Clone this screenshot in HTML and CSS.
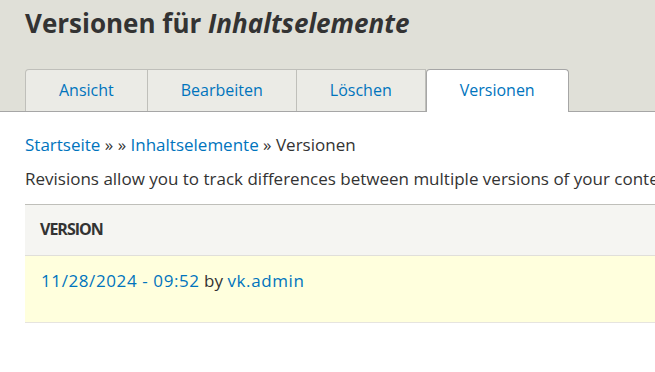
FILE: index.html
```html
<!DOCTYPE html>
<html lang="de">
<head>
  <meta charset="UTF-8">
  <meta name="viewport" content="width=device-width, initial-scale=1.0">
  <title>Versionen für Inhaltselemente</title>
  <link rel="stylesheet" href="styles.css">
</head>
<body>
  <div class="page">
    <header class="page-head">
      <h1>Versionen für <em>Inhaltselemente</em></h1>
      <ul class="tabs">
        <li><a href="#">Ansicht</a></li>
        <li><a href="#">Bearbeiten</a></li>
        <li><a href="#">Löschen</a></li>
        <li class="active"><a href="#">Versionen</a></li>
      </ul>
    </header>

    <main class="content">
      <nav class="breadcrumb">
        <a href="#">Startseite</a> » » <a href="#">Inhaltselemente</a> » Versionen
      </nav>
      <p class="intro">Revisions allow you to track differences between multiple versions of your content, and revert to older versions.</p>

      <table class="revisions">
        <thead>
          <tr><th>Version</th><th>Operations</th></tr>
        </thead>
        <tbody>
          <tr class="current">
            <td><a href="#">11/28/2024 - 09:52</a> by <a href="#">vk.admin</a></td>
            <td>Aktuelle Version</td>
          </tr>
        </tbody>
      </table>
    </main>
  </div>
</body>
</html>
```

FILE: styles.css
```css
body {
  margin: 0;
  font-family: "Open Sans", "Noto Sans", sans-serif;
  color: #333;
  background: #fff;
  overflow: hidden;
}

a {
  color: #0074bd;
  text-decoration: none;
}

.page {
  width: 1200px;
}

.page-head {
  background: #e0e0d8;
  padding: 0 25px;
  border-bottom: 1px solid #a6a6a6;
  height: 112px;
  box-sizing: border-box;
}

h1 {
  margin: 0;
  padding-top: 6px;
  font-size: 26px;
  line-height: 34px;
  font-weight: bold;
  color: #333;
}

h1 em {
  font-style: italic;
}

.tabs {
  display: flex;
  list-style: none;
  margin: 29px 0 0;
  padding: 0;
}

.tabs li {
  background: #ebebe6;
  border: 1px solid #bfbfba;
  border-bottom: none;
  border-left: none;
  height: 42px;
  box-sizing: border-box;
}

.tabs li:first-child {
  border-left: 1px solid #bfbfba;
  border-top-left-radius: 4px;
}

.tabs li.active {
  background: #fff;
  border: 1px solid #a6a6a6;
  border-bottom: none;
  border-radius: 4px 4px 0 0;
  height: 43px;
}

.tabs a {
  display: block;
  font-size: 16px;
  line-height: 40px;
  padding: 0 33px;
}

.content {
  padding: 0 25px;
}

.breadcrumb {
  font-size: 17px;
  line-height: 24px;
  margin-top: 21px;
}

.intro {
  font-size: 17px;
  line-height: 24px;
  margin: 10px 0 0;
}

.revisions {
  width: 100%;
  margin-top: 13px;
  border-collapse: separate;
  border-spacing: 0;
}

.revisions th {
  background: #f5f5f2;
  border-top: 1px solid #bfbfba;
  border-bottom: 1px solid #e0dfda;
  text-align: left;
  text-transform: uppercase;
  font-size: 16px;
  line-height: 20px;
  font-weight: bold;
  letter-spacing: -1px;
  padding: 14px 15px 16px;
}

.revisions td {
  font-size: 17px;
  line-height: 24px;
  padding: 13px 16px 29px;
  border-bottom: 1px solid #e6e4df;
  vertical-align: top;
}

.revisions td a {
  letter-spacing: 0.6px;
}

.revisions tr.current td {
  background: #ffffdd;
}
```
